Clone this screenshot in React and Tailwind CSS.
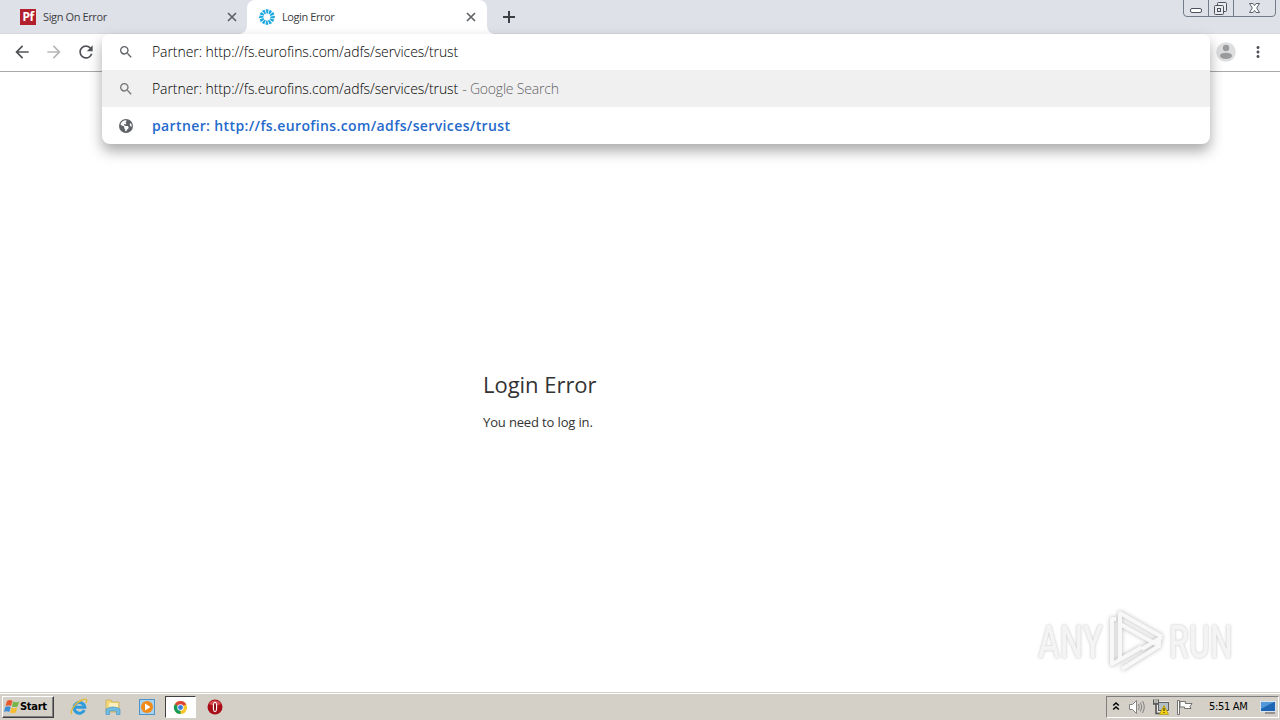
import { FaEarthAmericas } from 'react-icons/fa6'
import { MdArrowBack, MdArrowForward, MdRefresh, MdSearch, MdMoreVert } from 'react-icons/md'

const URL_TEXT = 'Partner: http://fs.eurofins.com/adfs/services/trust'

function SunIcon() {
  return (
    <svg className="h-4 w-4 shrink-0" viewBox="0 0 16 16">
      {Array.from({ length: 12 }, (_, i) => (
        <path key={i} d="M6.7 0 L9.6 0.6 L8.9 4.4 L7.5 4.6 Z" fill="#1ba8e0" transform={`rotate(${i * 30} 8 8)`} />
      ))}
    </svg>
  )
}

function CloseIcon() {
  return (
    <svg className="h-[14px] w-[14px] shrink-0" viewBox="0 0 14 14" fill="none" stroke="#5f6368" strokeWidth="1.7">
      <path d="M3 3 L11 11 M11 3 L3 11" />
    </svg>
  )
}

function TabStrip() {
  return (
    <div className="flex h-[34px] w-full bg-[#dee1e8] shadow-[inset_0_-1px_0_#d6d8dc]">
      <div className="flex h-[34px] w-[247px] items-center pl-5 pr-[8px]">
        <div className="flex h-4 w-4 items-center justify-center bg-[#b41f2c] font-['Noto_Sans',sans-serif] text-[12px] font-bold leading-none tracking-[-0.5px] text-white">Pf</div>
        <span className="ml-[7px] flex-1 whitespace-nowrap text-[11px] tracking-[-0.38px] text-[#3c4043]">Sign On Error</span>
        <CloseIcon />
      </div>
      <div className="relative flex h-[34px] w-[240px] items-center rounded-t-lg bg-white pl-3 pr-[9px]">
        <svg className="absolute -left-2 bottom-0 h-2 w-2" viewBox="0 0 8 8"><path d="M8 0 V8 H0 A8 8 0 0 0 8 0Z" fill="#fff" /></svg>
        <svg className="absolute -right-2 bottom-0 h-2 w-2" viewBox="0 0 8 8"><path d="M0 0 V8 H8 A8 8 0 0 1 0 0Z" fill="#fff" /></svg>
        <SunIcon />
        <span className="ml-[7px] flex-1 whitespace-nowrap text-[11px] tracking-[-0.42px] text-[#3c4043]">Login Error</span>
        <CloseIcon />
      </div>
      <svg className="ml-[13px] mt-2 h-[18px] w-[18px]" viewBox="0 0 18 18" fill="none" stroke="#3c4043" strokeWidth="2">
        <path d="M9 3 V15 M3 9 H15" />
      </svg>
      <WindowControls />
    </div>
  )
}

function WindowControls() {
  return (
    <svg className="ml-auto mr-1 h-[17px] w-[93px]" viewBox="0 0 93 17" fill="none" stroke="#747c8a">
      <path d="M0.5 0 V13 Q0.5 16.5 4 16.5 H89 Q92.5 16.5 92.5 13 V0 M25.5 0 V16 M50.5 0 V16" />
      <rect x="7.5" y="8.5" width="11" height="4" rx="1.5" fill="#fff" stroke="#4c515b" />
      <g stroke="#4c515b" fill="#e9ebef">
        <rect x="34.5" y="2.5" width="9" height="9" rx="1" />
        <rect x="31.5" y="5.5" width="9" height="9" rx="1" />
        <rect x="34.5" y="8.5" width="3" height="3" />
      </g>
      <path d="M66.5 3.5 H70 L71.5 5.6 L73 3.5 H76.5 L73.7 8 L76.5 12.5 H73 L71.5 10.4 L70 12.5 H66.5 L69.3 8Z" fill="#fff" stroke="#4c515b" strokeWidth="0.9" />
    </svg>
  )
}

function Toolbar() {
  return (
    <div className="relative flex h-[38px] items-center border-b border-[#a8a9ab] bg-white pb-px pl-3 pr-3">
      <MdArrowBack className="h-5 w-5 text-[#505357]" />
      <MdArrowForward className="ml-3 h-5 w-5 text-[#b6b8ba]" />
      <MdRefresh className="ml-3 h-5 w-5 text-[#505357]" />
      <svg className="ml-auto h-5 w-5" viewBox="0 0 20 20">
        <circle cx="10" cy="10" r="9.8" fill="#dddedf" />
        <circle cx="10" cy="6" r="3.2" fill="#999b9d" />
        <ellipse cx="10" cy="13.8" rx="6" ry="3.1" fill="#999b9d" />
      </svg>
      <MdMoreVert className="ml-[13px] mr-px h-[18px] w-[18px] text-[#505357]" />
      <Suggestions />
    </div>
  )
}

function Suggestions() {
  return (
    <div className="absolute left-[102px] top-0 z-10 h-[110px] w-[1108px] rounded-lg bg-white text-[14px] text-[#202124] shadow-[0_7px_14px_rgba(0,0,0,0.34)]">
      <div className="flex h-9 items-center pb-px pl-4">
        <MdSearch className="h-4 w-4 text-[#5f6368]" />
        <span className="ml-[18px] whitespace-nowrap font-light tracking-[-0.073px] text-black">{URL_TEXT}</span>
      </div>
      <div className="flex h-[37px] items-center bg-[#f0f0f0] pl-4">
        <MdSearch className="h-4 w-4 text-[#757779]" />
        <span className="ml-[18px] whitespace-nowrap font-light tracking-[-0.073px] text-black">{URL_TEXT}</span>
        <span className="ml-1 whitespace-nowrap font-light tracking-[-0.2px] text-[#5f6368]">- Google Search</span>
      </div>
      <div className="flex h-[37px] items-center pl-[17px]">
        <FaEarthAmericas className="h-[14px] w-[14px] text-[#5f6368]" />
        <span className="ml-[19px] whitespace-nowrap font-semibold tracking-[0.38px] text-[#2569cc]">partner: http://fs.eurofins.com/adfs/services/trust</span>
      </div>
    </div>
  )
}

function Watermark() {
  return (
    <div className="absolute right-[47px] top-[610px] flex h-[62px] w-[195px] items-center justify-between font-['Roboto',sans-serif] text-[47px] font-medium leading-none text-[#f4f4f4] [text-shadow:0_0_3px_#bdbdbd]">
      <span className="w-[66px] origin-left scale-x-[0.7] whitespace-nowrap">ANY</span>
      <svg className="h-[62px] w-[58px] shrink-0 drop-shadow-[0_0_2px_#b5b5b5]" viewBox="0 0 58 62" fill="none" stroke="#f8f8f8" strokeWidth="4" strokeLinejoin="round">
        <path d="M12 51 V3 L54 27 M54 27 L34 39" />
        <path d="M8 9 H4 V54 L13 49 L34 37" />
        <path d="M12 14 L48 34 L51 30 V36 L14 59" />
      </svg>
      <span className="w-[64px] origin-left scale-x-[0.68] whitespace-nowrap">RUN</span>
    </div>
  )
}

function StartFlag() {
  return (
    <svg className="h-4 w-4 shrink-0" viewBox="0 0 16 16">
      <path d="M3 2 Q6 0 8.5 2 L7 7 Q4.5 5.5 1.5 7Z" fill="#e7592c" />
      <path d="M9.3 2.4 Q12 4 15.2 2.3 L13.6 7.4 Q10.7 8.8 7.9 7.4Z" fill="#76b648" />
      <path d="M1.3 8 Q4 6.5 6.7 8 L5.3 13 Q2.7 11.5 0 13Z" fill="#3c8ed5" />
      <path d="M7.6 8.4 Q10.3 10 13.3 8.4 L11.8 13.4 Q9 15 6.1 13.4Z" fill="#f6bd31" />
    </svg>
  )
}

function ExplorerIcons() {
  return (
    <>
      <svg className="ml-[16px] h-[18px] w-[18px]" viewBox="0 0 18 18" fill="none">
        <path d="M14.3 12.2 A5.4 5.4 0 1 1 14.8 9.2 H5.5" stroke="#2e9bdc" strokeWidth="3" />
        <path d="M2 16 C-1 14 5 5 12 2 C17 0 17.5 2 16 5" stroke="#e2b83a" strokeWidth="1.4" />
      </svg>
      <svg className="ml-[16px] h-[18px] w-[18px]" viewBox="0 0 18 18">
        <path d="M2 2 H7 L8 4 H15 V14 H2Z" fill="#f2d779" stroke="#c9a94b" strokeWidth="0.7" />
        <path d="M5 5 H14 V9 H5Z" fill="#fbf0bd" />
        <path d="M2 11 Q9 7 16 11 V16.5 H12.5 V13 H5.5 V16.5 H2Z" fill="#6fbbe3" stroke="#4a9ac5" strokeWidth="0.7" />
      </svg>
      <svg className="ml-[16px] h-[18px] w-[18px]" viewBox="0 0 18 18">
        <rect x="1.5" y="1.5" width="15" height="15" fill="#a8d2ef" stroke="#4e94c8" />
        <circle cx="9" cy="9" r="6" fill="#f18a16" />
        <path d="M7 5.5 L12.5 9 L7 12.5Z" fill="#fff" />
      </svg>
    </>
  )
}

function ChromeIcon() {
  return (
    <svg className="h-[15px] w-[15px]" viewBox="0 0 16 16">
      <circle cx="8" cy="8" r="7" fill="#f7c72b" />
      <path d="M8 8 L1.9 4.5 A7 7 0 0 1 14.1 4.5Z" fill="#db4437" />
      <path d="M8 8 L1.9 4.5 A7 7 0 0 0 8 15Z" fill="#159a59" />
      <circle cx="8" cy="8" r="3.4" fill="#fff" />
      <circle cx="8" cy="8" r="2.6" fill="#3d7de0" />
    </svg>
  )
}

function Tray() {
  return (
    <div className="ml-auto mr-[1px] flex h-[22px] w-[173px] items-center border border-b-white border-l-[#808080] border-r-white border-t-[#808080] text-[11px] text-black">
      <svg className="ml-[5px] h-3 w-2" viewBox="0 0 8 12" fill="none" stroke="#000" strokeWidth="1.5"><path d="M1.2 4.5 L4 2 L6.8 4.5 M1.2 8.5 L4 6 L6.8 8.5" /></svg>
      <svg className="ml-[9px] h-4 w-4" viewBox="0 0 16 16" fill="#fff" stroke="#777" strokeWidth="0.9">
        <path d="M0.5 5.5 H3.5 L7.5 1.5 V14.5 L3.5 10.5 H0.5Z" />
        <path d="M9.5 5 Q11 8 9.5 11 M11.5 3.5 Q14 8 11.5 12.5 M13.5 2 Q17 8 13.5 14" fill="none" />
      </svg>
      <svg className="ml-[8px] h-4 w-4" viewBox="0 0 16 16" stroke="#555" strokeWidth="0.9">
        <rect x="5.5" y="3.5" width="10" height="8" fill="#b4c0c8" stroke="#fff" strokeWidth="2" />
        <rect x="5.5" y="3.5" width="10" height="8" fill="#b4c0c8" />
        <path d="M0.8 0.5 V5 H5.2 V0.5 M3 0.5 V14.5 H8" fill="none" stroke="#555" strokeWidth="1.6" />
        <path d="M2 1 V4 M4 1 V4" stroke="#fff" />
        <path d="M11 6.5 L15.5 15.3 H6.5Z" fill="#f6d516" stroke="#b79b13" />
        <path d="M11 9 V12 M11 13 V14" stroke="#000" />
      </svg>
      <svg className="ml-[8px] h-4 w-4" viewBox="0 0 16 16" fill="#fff" stroke="#666" strokeWidth="0.9">
        <path d="M0.5 15.5 V1.5 H2.5 V15.5Z" />
        <path d="M3 2.5 H8.5 V4.5 H15 L13 7.5 L14 9.5 H7.5 V8 H3Z" />
      </svg>
      <span className="ml-4 w-[43px] whitespace-nowrap [font-family:'DejaVu_Sans',sans-serif] [font-stretch:condensed] tracking-[-0.3px]">5:51 AM</span>
      <svg className="ml-[8px] h-4 w-4" viewBox="0 0 16 16">
        <rect x="0.5" y="2.5" width="15" height="10" fill="#1e65b5" stroke="#d7e3ed" />
        <path d="M1 3 H14 L1 10Z" fill="#5198d8" />
        <path d="M5 14 H15" stroke="#555" />
      </svg>
    </div>
  )
}

function Taskbar() {
  return (
    <div className="flex h-[28px] w-full items-center border-t border-[#d4d0c8] bg-[#d4d0c8] pl-[2px] pt-px shadow-[inset_0_1px_0_#fff]">
      <div className="flex h-[22px] w-[52px] items-center border border-b-[#404040] border-l-white border-r-[#404040] border-t-white pl-px shadow-[inset_-1px_-1px_0_#808080]">
        <StartFlag />
        <span className="whitespace-nowrap [font-family:'DejaVu_Sans',sans-serif] [font-stretch:condensed] text-[11px] font-bold tracking-[-0.3px] text-black">Start</span>
      </div>
      <ExplorerIcons />
      <div className="ml-[9px] flex h-[22px] w-[31px] items-center justify-center border border-b-white border-l-[#404040] border-r-white border-t-[#404040] bg-white">
        <ChromeIcon />
      </div>
      <svg className="ml-[11px] h-4 w-4" viewBox="0 0 16 16">
        <circle cx="8" cy="8" r="7.5" fill="#a90e18" />
        <path d="M2 5 A7 7 0 0 1 14 5 Q8 8 2 5Z" fill="#d64b50" />
        <ellipse cx="8" cy="8" rx="2.2" ry="5.2" fill="#fff" />
        <ellipse cx="8" cy="8" rx="1" ry="4.2" fill="#8b0812" />
      </svg>
      <Tray />
    </div>
  )
}

export default function App() {
  return (
    <div className="relative flex h-[720px] w-[1280px] flex-col overflow-hidden bg-white font-['Open_Sans','Noto_Sans',sans-serif]">
      <TabStrip />
      <Toolbar />
      <main className="flex-1 pl-[483px] pt-[297px] text-[#333]">
        <h1 className="text-[22px] leading-[30px] tracking-[-0.03px]">Login Error</h1>
        <p className="mt-[13px] text-[13px] leading-5 tracking-[-0.14px]">You need to log in.</p>
      </main>
      <Watermark />
      <Taskbar />
    </div>
  )
}
